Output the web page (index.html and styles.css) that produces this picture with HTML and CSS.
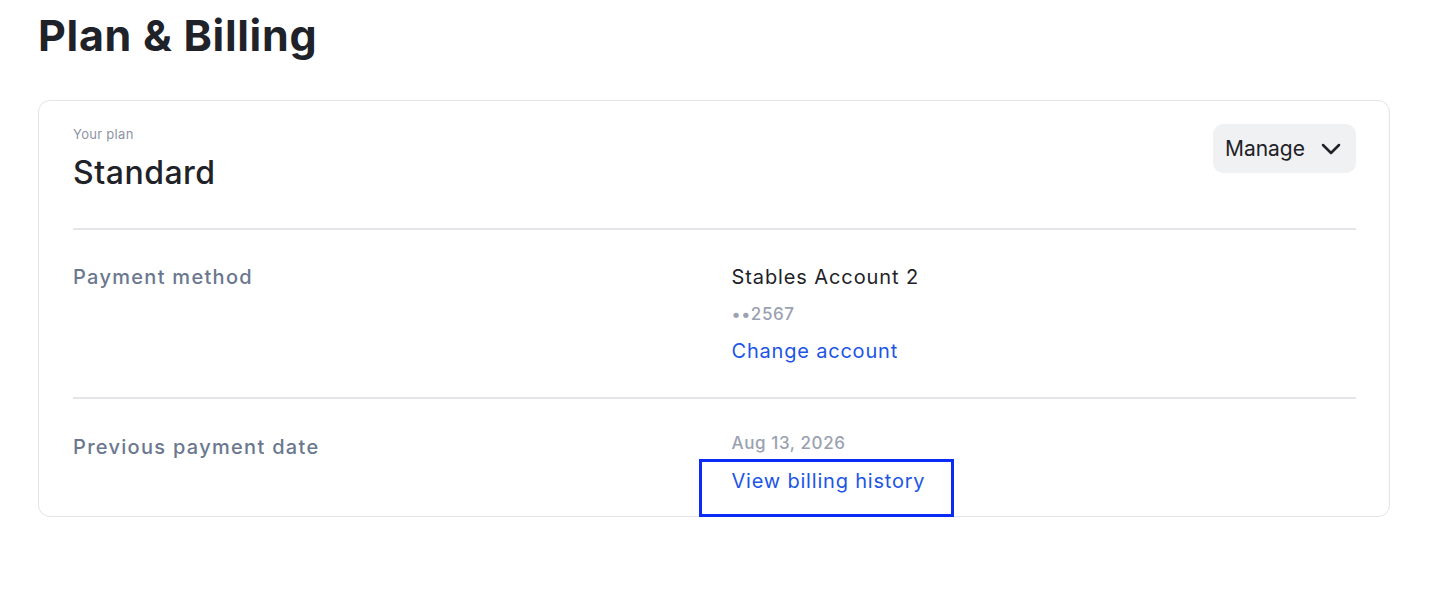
FILE: index.html
```html
<!DOCTYPE html>
<html lang="en">
<head>
<meta charset="utf-8">
<title>Plan &amp; Billing</title>
<link rel="stylesheet" href="styles.css">
</head>
<body>
<main class="page">
  <h1 class="page-title">Plan &amp; Billing</h1>
  <section class="card">
    <header class="card-head">
      <div class="plan">
        <div class="plan-label">Your plan</div>
        <div class="plan-name">Standard</div>
      </div>
      <button class="manage" type="button">
        <span>Manage</span>
        <svg class="chev" width="20" height="12" viewBox="0 0 20 12" aria-hidden="true">
          <path d="M2 2l8 8 8-8" fill="none" stroke="currentColor" stroke-width="2.5" stroke-linecap="round" stroke-linejoin="round"/>
        </svg>
      </button>
    </header>
    <div class="row">
      <div class="row-label">Payment method</div>
      <div class="row-value">
        <div class="value-main">Stables Account 2</div>
        <div class="value-sub">••2567</div>
        <a class="link" href="#">Change account</a>
      </div>
    </div>
    <div class="row row-last">
      <div class="row-label">Previous payment date</div>
      <div class="row-value">
        <div class="value-sub">Aug 13, 2026</div>
        <a class="link link-focus" href="#">View billing history</a>
      </div>
    </div>
  </section>
</main>
</body>
</html>
```

FILE: styles.css
```css
* { box-sizing: border-box; }

html, body {
  margin: 0;
  background: #ffffff;
}

body {
  font-family: Inter, "Noto Sans", "DejaVu Sans", sans-serif;
  color: #1f2228;
}

.page {
  padding: 8px 64px 0 38px;
}

.page-title {
  margin: 0;
  font-size: 43px;
  line-height: 54px;
  font-weight: 700;
  letter-spacing: 0.7px;
  color: #1f2228;
}

.card {
  margin-top: 38px;
  width: 1352px;
  border: 1px solid #e3e4e7;
  border-radius: 12px;
  padding: 0 33px 0 34px;
}

.card-head {
  display: flex;
  justify-content: space-between;
  align-items: flex-start;
  padding: 23px 0 35px;
  border-bottom: 2px solid #e4e5e8;
}

.plan-label {
  font-size: 13px;
  line-height: 20px;
  letter-spacing: 0.3px;
  color: #8d94a3;
}

.plan-name {
  margin-top: 9px;
  font-size: 32px;
  line-height: 40px;
  font-weight: 500;
  letter-spacing: 0.5px;
  color: #1f2228;
}

.manage {
  display: flex;
  align-items: center;
  gap: 16px;
  height: 49px;
  padding: 0 15px 0 12px;
  border: 0;
  border-radius: 10px;
  background: #f0f1f3;
  font-family: inherit;
  font-size: 21px;
  color: #1f2228;
  cursor: pointer;
}

.chev { display: block; margin-top: 1px; }

.row {
  display: grid;
  grid-template-columns: 1fr 1fr;
  column-gap: 34px;
  padding: 32px 0 31px;
  border-bottom: 2px solid #e4e5e8;
}

.row-last {
  border-bottom: 0;
  padding-bottom: 20px;
}

.row-label {
  font-size: 20px;
  line-height: 30px;
  font-weight: 500;
  letter-spacing: 1.3px;
  color: #6b778f;
}

.row-last .row-label { margin-top: 1px; }

.row-value {
  display: flex;
  flex-direction: column;
  align-items: flex-start;
  gap: 10px;
}

.row-last .row-value { gap: 11px; }

.value-main {
  font-size: 20px;
  line-height: 30px;
  letter-spacing: 0.9px;
  color: #1f2228;
}

.value-sub {
  font-size: 17px;
  line-height: 24px;
  font-weight: 500;
  letter-spacing: 0.6px;
  color: #9aa1b0;
}

.link {
  font-size: 20px;
  line-height: 30px;
  letter-spacing: 0.8px;
  color: #1c55e6;
  text-decoration: none;
}

.link-focus {
  position: relative;
}

/* focus ring drawn around the active link */
.link-focus::after {
  content: "";
  position: absolute;
  left: -33px;
  right: -29px;
  top: -7px;
  bottom: -21px;
  border: 3px solid #0b2cf5;
  pointer-events: none;
}
```
